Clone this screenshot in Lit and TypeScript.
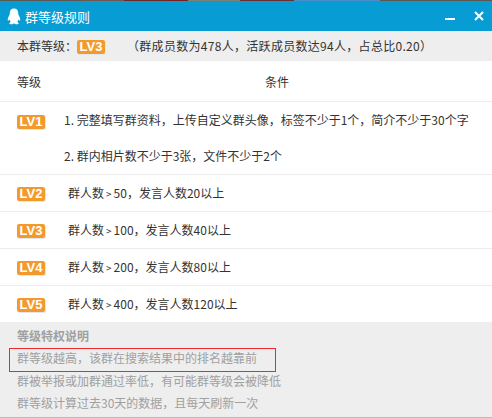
import { LitElement, html, css } from "lit";
import { customElement } from "lit/decorators.js";

const rows = [
  ["LV2", "50", "20"],
  ["LV3", "100", "40"],
  ["LV4", "200", "80"],
  ["LV5", "400", "120"],
];

@customElement("app-root")
export class AppRoot extends LitElement {
  static styles = css`
    :host { display: block; width: 492px; height: 418px; overflow: hidden; background: #fff; text-spacing-trim: space-all;
      font-family: "Noto Sans CJK SC", "Liberation Sans", sans-serif; font-size: 12px; color: #333; }
    .strip { height: 1px; background: linear-gradient(90deg,
      #5a5a52 0 82px, #6e5a50 82px 124px, #6a2a2a 124px 168px, #7a1f1f 168px 188px,
      #7a8074 188px 240px, #6a3030 240px 294px, #4a8fc9 294px 380px, #5a5a52 380px 492px); }
    .title { height: 30px; background: #089cd5; color: #fff; display: flex; align-items: center; padding: 0 7px; gap: 4px; font-size: 13px; }
    .title svg.q { width: 14px; height: 17px; }
    .title span { flex: 1; }
    .ctl { display: flex; align-items: center; gap: 19px; padding-right: 1px; }
    .info { height: 30px; box-sizing: border-box; background: #eeeeee; display: flex; align-items: center; padding: 0 0 2px 17px; }
    .info .stat { margin-left: 22px; white-space: nowrap; letter-spacing: 0.3px; }
    .lv { display: inline-block; width: 28px; height: 14px; border-radius: 2px; background: #f39a2e; color: #fff;
      font: bold 13px/14px "Liberation Sans", sans-serif; text-align: center; box-shadow: 1px 1px 0 #e6e6e6; }
    .info .lv { margin-top: 4px; }
    .head { height: 40px; display: flex; align-items: center; border-bottom: 1px solid #ececec; }
    .head .a { width: 17px; }
    .head .b { width: 248px; }
    .row { display: flex; align-items: center; height: 36px; border-bottom: 1px solid #ececec; padding-left: 17px; }
    .row:nth-last-child(2) { border-bottom: none; }
    .row .lv { margin-top: 2px; }
    .row .t { margin: 0 0 1px 23px; }
    .gt { font-size: 10px; margin: 0 2px; }
    .row.first { height: 72px; align-items: flex-start; }
    .row.first .lv { margin-top: 13px; }
    .row.first .t { margin: 0 0 0 19px; line-height: 36px; }
    .foot { height: 96px; box-sizing: border-box; background: #eeeeee; border-bottom: 1px solid #bbbbbb; padding: 3px 0 0 17px; color: #a0a0a0; line-height: 22.300px; position: relative; }
    .foot b { font-weight: bold; display: block; }
    .mark { position: absolute; left: 9px; top: 26px; width: 265px; height: 22px; border: 1px solid #f0282d; }
  `;
  render() {
    return html`
      <div class="strip"></div>
      <div class="title">
        <svg class="q" viewBox="0 0 14 17"><path fill="#fff" d="M7 0.500C4.200 0.500 2.800 2.600 2.800 5.200c0 .9-.2 1.500-.6 2.200C1.200 9.100 .5 10.800 .8 12.600c.6.300 1.200-.3 1.600-1 .3 1 .8 1.800 1.400 2.300-1 .4-1.600.9-1.500 1.500.2.800 2.500 1 3.700.5.400-.2.700-.3 1-.3s.6.100 1 .3c1.200.5 3.500.3 3.700-.5.100-.6-.5-1.100-1.500-1.500.6-.5 1.100-1.300 1.400-2.300.4.700 1 1.300 1.600 1 .3-1.800-.4-3.500-1.400-5.200-.4-.7-.6-1.300-.6-2.200C11.200 2.600 9.800 .5 7 .5z"/></svg>
        <span>群等级规则</span>
        <div class="ctl">
          <svg width="10" height="10" viewBox="0 0 10 10"><rect x="0" y="7" width="10" height="2" fill="#fff"/></svg>
          <svg width="10" height="10" viewBox="0 0 10 10"><path d="M1 1l8 8M9 1l-8 8" stroke="#fff" stroke-width="2" fill="none"/></svg>
        </div>
      </div>
      <div class="info"><span>本群等级：</span><span class="lv">LV3</span><span class="stat">（群成员数为478人，活跃成员数达94人，占总比0.20）</span></div>
      <div class="head"><span class="a"></span><span class="b">等级</span><span>条件</span></div>
      <div class="row first"><span class="lv">LV1</span><div class="t">1. 完整填写群资料，上传自定义群头像，标签不少于1个，简介不少于30个字<br>2. 群内相片数不少于3张，文件不少于2个</div></div>
      ${rows.map(
        ([lv, n, s]) => html`<div class="row"><span class="lv">${lv}</span><span class="t">群人数<span class="gt">&gt;</span>${n}，发言人数${s}以上</span></div>`
      )}
      <div class="foot">
        <b>等级特权说明</b>
        <div>群等级越高，该群在搜索结果中的排名越靠前</div>
        <div>群被举报或加群通过率低，有可能群等级会被降低</div>
        <div>群等级计算过去30天的数据，且每天刷新一次</div>
        <span class="mark"></span>
      </div>
    `;
  }
}
